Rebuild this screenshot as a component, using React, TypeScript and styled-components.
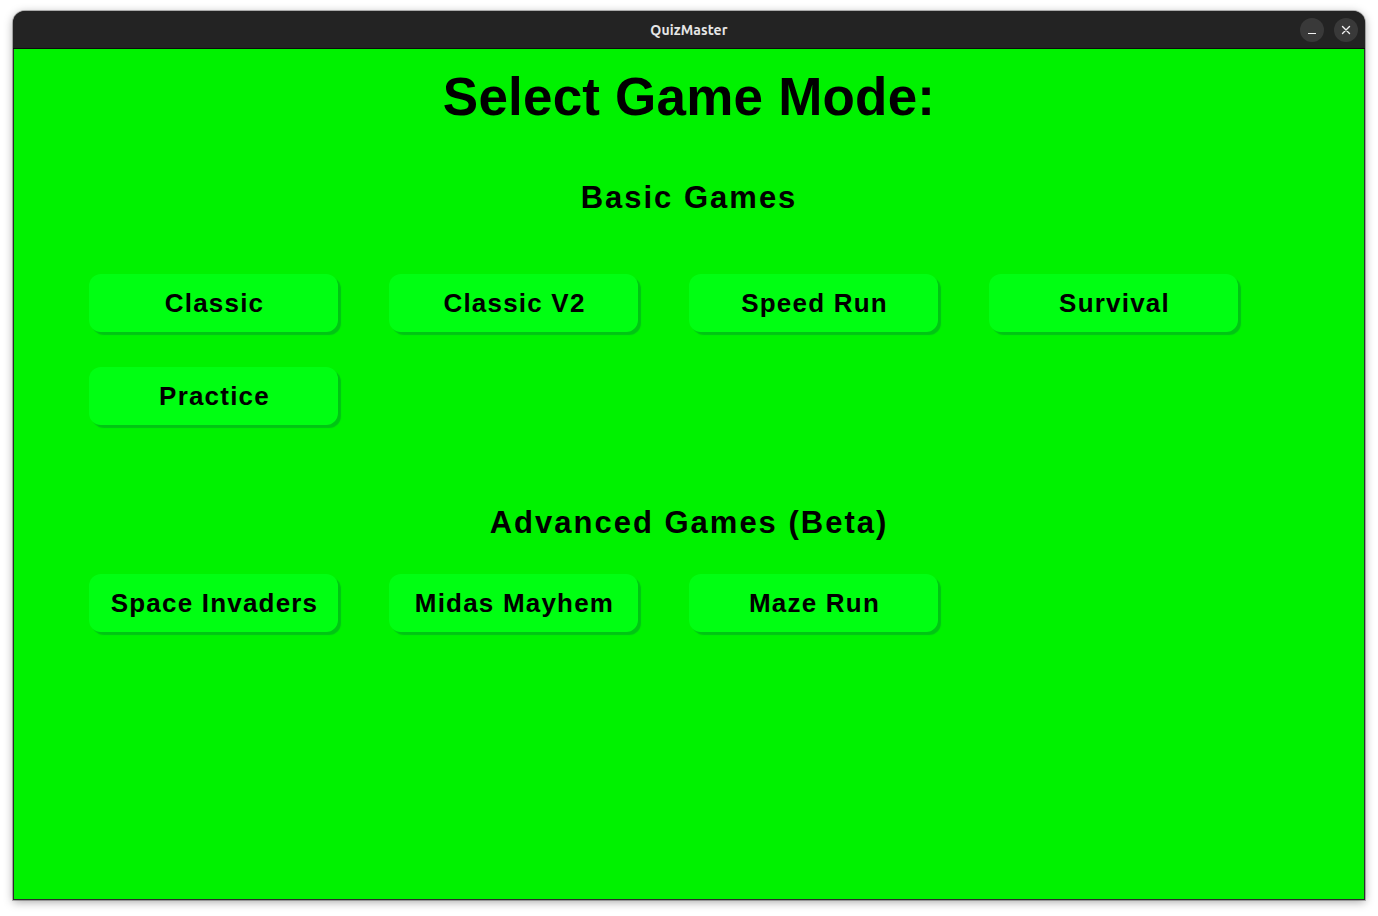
import React from "react";
import styled, { createGlobalStyle } from "styled-components";

const Global = createGlobalStyle`
  html, body { margin: 0; padding: 0; background: #ffffff; }
  body { font-family: "Liberation Sans", Arial, sans-serif; }
`;

const Desktop = styled.div`
  width: 1378px;
  height: 916px;
  padding: 11px 0 0 13px;
  box-sizing: border-box;
`;

const Window = styled.div`
  width: 1352px;
  height: 889px;
  display: flex;
  flex-direction: column;
  border-radius: 12px 12px 0 0;
  overflow: hidden;
  box-shadow: 0 2px 10px rgba(0, 0, 0, 0.35), 0 0 0 1px rgba(0, 0, 0, 0.25);
  background: #222222;
`;

const TitleBar = styled.div`
  position: relative;
  height: 37px;
  flex: 0 0 37px;
  background: #232323;
  border-bottom: 1px solid #0c0c0c;
  display: flex;
  align-items: center;
  justify-content: center;
`;

const TitleText = styled.span`
  font-family: "Ubuntu", "Noto Sans", "Open Sans", sans-serif;
  font-weight: 700;
  font-size: 14px;
  color: #e6e6e6;
  letter-spacing: 0.1px;
`;

const Controls = styled.div`
  position: absolute;
  right: 7px;
  top: 7px;
  display: flex;
  gap: 10px;
`;

const CtrlButton = styled.div`
  width: 24px;
  height: 24px;
  border-radius: 50%;
  background: #393939;
  display: flex;
  align-items: center;
  justify-content: center;
`;

const Content = styled.main`
  flex: 1;
  background: #00f200;
  border: 1px solid #2b2b2b;
  border-top: none;
  display: flex;
  flex-direction: column;
  align-items: center;
  padding-top: 18px;
`;

const Title = styled.h1`
  margin: 0;
  font-family: "Liberation Sans", Arial, sans-serif;
  font-weight: 700;
  font-size: 53px;
  line-height: 60px;
  letter-spacing: 0.2px;
  color: #000;
`;

const SectionTitle = styled.h2<{ $top: number; $bottom: number }>`
  margin: ${(p) => p.$top}px 0 ${(p) => p.$bottom}px;
  font-family: "Liberation Sans", Arial, sans-serif;
  font-weight: 700;
  font-size: 31px;
  line-height: 40px;
  letter-spacing: 2px;
  color: #000;
`;

const Grid = styled.div`
  align-self: flex-start;
  margin-left: 75px;
  display: grid;
  grid-template-columns: repeat(4, 249px);
  column-gap: 51px;
  row-gap: 35px;
`;

const ModeButton = styled.button`
  height: 58px;
  border: none;
  border-radius: 12px;
  background: #00ff12;
  box-shadow: 3px 3px 1px #00c514;
  font-family: "Liberation Sans", Arial, sans-serif;
  font-weight: 700;
  font-size: 26px;
  letter-spacing: 1.2px;
  color: #000;
  display: flex;
  align-items: center;
  justify-content: center;
  padding: 0 0 0 2px;
  cursor: pointer;
`;

const basic = ["Classic", "Classic V2", "Speed Run", "Survival", "Practice"];
const advanced = ["Space Invaders", "Midas Mayhem", "Maze Run"];

export default function App() {
  return (
    <>
      <Global />
      <Desktop>
        <Window>
          <TitleBar>
            <TitleText>QuizMaster</TitleText>
            <Controls>
              <CtrlButton>
                <svg width="10" height="10" viewBox="0 0 10 10">
                  <line x1="1" y1="8.5" x2="9" y2="8.5" stroke="#f0f0f0" strokeWidth="1.2" />
                </svg>
              </CtrlButton>
              <CtrlButton>
                <svg width="10" height="10" viewBox="0 0 10 10">
                  <path d="M1.5 1.5 L8.5 8.5 M8.5 1.5 L1.5 8.5" stroke="#f0f0f0" strokeWidth="1.4" strokeLinecap="round" />
                </svg>
              </CtrlButton>
            </Controls>
          </TitleBar>
          <Content>
            <Title>Select Game Mode:</Title>
            <SectionTitle $top={51} $bottom={56}>Basic Games</SectionTitle>
            <Grid>
              {basic.map((m) => (
                <ModeButton key={m}>{m}</ModeButton>
              ))}
            </Grid>
            <SectionTitle $top={78} $bottom={31}>Advanced Games (Beta)</SectionTitle>
            <Grid>
              {advanced.map((m) => (
                <ModeButton key={m}>{m}</ModeButton>
              ))}
            </Grid>
          </Content>
        </Window>
      </Desktop>
    </>
  );
}
